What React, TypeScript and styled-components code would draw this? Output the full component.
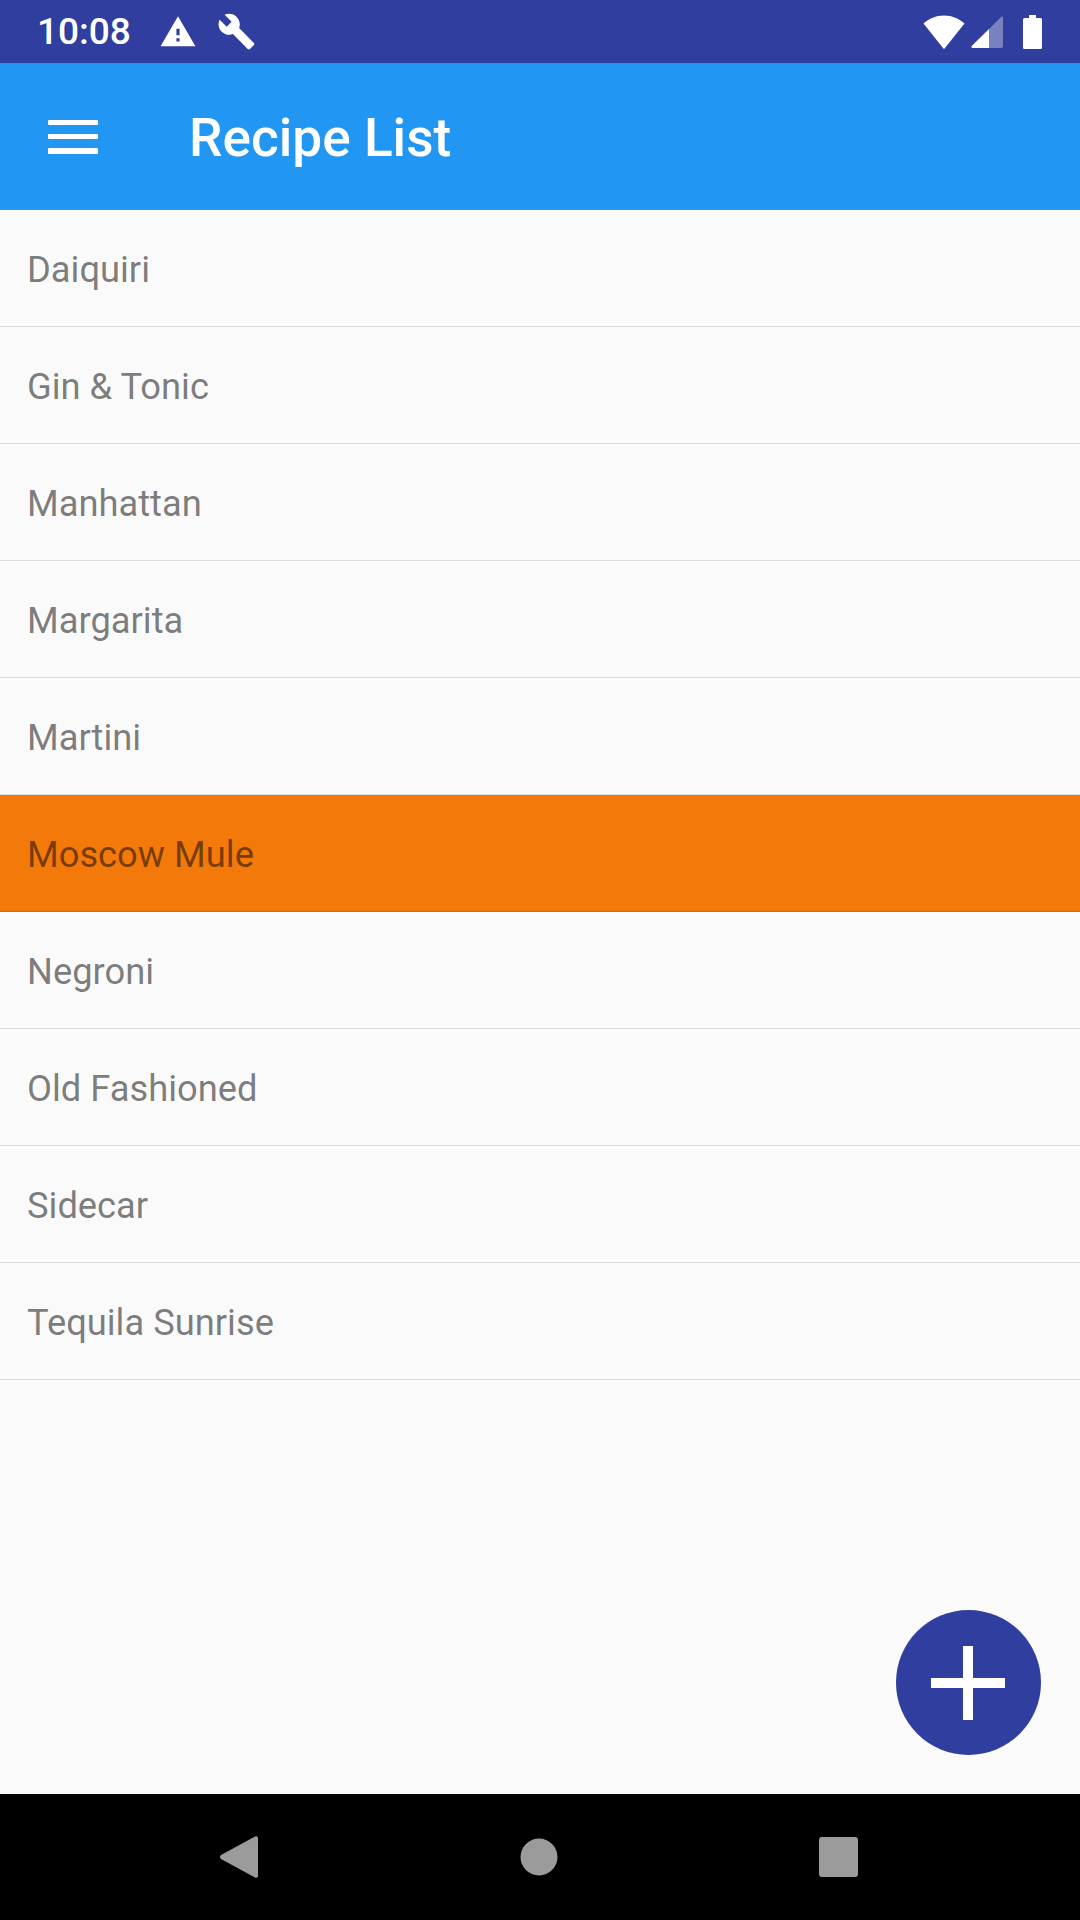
import styled, { createGlobalStyle } from 'styled-components';

const recipes = [
  'Daiquiri',
  'Gin & Tonic',
  'Manhattan',
  'Margarita',
  'Martini',
  'Moscow Mule',
  'Negroni',
  'Old Fashioned',
  'Sidecar',
  'Tequila Sunrise',
];

const GlobalStyle = createGlobalStyle`
  html, body {
    margin: 0;
    padding: 0;
    background: #fafafa;
    font-family: Roboto, "Liberation Sans", sans-serif;
  }
`;

const Screen = styled.div`
  position: relative;
  display: flex;
  flex-direction: column;
  width: 1080px;
  height: 1920px;
  overflow: hidden;
  background: #fafafa;
`;

const StatusBar = styled.div`
  display: flex;
  align-items: center;
  flex: 0 0 63px;
  padding: 0 38px 0 37px;
  background: #303f9f;
  color: #fff;
`;

const Clock = styled.span`
  font-size: 37px;
  font-weight: 500;
  line-height: 63px;
  margin-right: 28px;
`;

const StatusIcon = styled.svg<{ $gap?: number }>`
  display: block;
  fill: #fff;
  margin-right: ${p => p.$gap ?? 0}px;
`;

const Spacer = styled.div`
  flex: 1;
`;

const AppBar = styled.header`
  display: flex;
  align-items: center;
  flex: 0 0 147px;
  padding-left: 48px;
  background: #2196f3;
  color: #fff;
`;

const MenuIcon = styled.div`
  display: flex;
  flex-direction: column;
  justify-content: space-between;
  width: 50px;
  height: 34px;
  margin-right: 91px;
  > span {
    display: block;
    height: 5.5px;
    background: #fff;
    border-radius: 1px;
  }
`;

const Title = styled.h1`
  margin: 4px 0 0;
  font-size: 53.2px;
  font-weight: 500;
  line-height: 1;
`;

const List = styled.div`
  flex: 1;
`;

const Row = styled.div<{ $selected?: boolean }>`
  display: flex;
  align-items: center;
  box-sizing: border-box;
  height: 117px;
  padding: 2px 0 0 27px;
  font-size: 36.3px;
  color: rgba(0, 0, 0, 0.52);
  background: ${p => (p.$selected ? '#f3790a' : 'transparent')};
  border-bottom: 1px solid rgba(0, 0, 0, 0.12);
`;

const Fab = styled.button`
  position: absolute;
  right: 39px;
  bottom: 165px;
  display: flex;
  align-items: center;
  justify-content: center;
  width: 145px;
  height: 145px;
  padding: 0 2px 0 0;
  border: 0;
  border-radius: 50%;
  background: #303f9f;
`;

const NavBar = styled.nav`
  display: grid;
  grid-template-columns: repeat(3, 300px);
  justify-content: center;
  justify-items: center;
  align-items: center;
  flex: 0 0 126px;
  padding-right: 3px;
  background: #000;
`;

const NavIcon = styled.svg`
  display: block;
  fill: #9b9b9b;
`;

export default function App() {
  return (
    <Screen>
      <GlobalStyle />
      <StatusBar>
        <Clock>10:08</Clock>
        <StatusIcon $gap={20} width="38" height="38" viewBox="0 0 24 24">
          <path d="M1 21h22L12 2 1 21zm12-3h-2v-2h2v2zm0-4h-2v-4h2v4z" />
        </StatusIcon>
        <StatusIcon width="39" height="39" viewBox="0 0 24 24">
          <path d="M22.7 19l-9.1-9.1c.9-2.3.4-5-1.5-6.9-2-2-5-2.4-7.4-1.3L9 6 6 9 1.600 4.700C.4 7.100.9 10.100 2.900 12.100c1.900 1.900 4.600 2.400 6.900 1.500l9.100 9.100c.4.4 1 .4 1.400 0l2.300-2.300c.5-.4.5-1.100.1-1.400z" />
        </StatusIcon>
        <Spacer />
        <StatusIcon $gap={6} width="42" height="34" viewBox="0 0 42 34">
          <path d="M0.500 8.500C6 3.500 13 0.500 21 0.500s15 3 20.500 8L21.800 33.200a1 1 0 0 1-1.600 0z" />
        </StatusIcon>
        <StatusIcon $gap={20} width="32" height="32" viewBox="0 0 32 32">
          <path opacity="0.35" d="M18 13L30 1c.8-.8 2-.3 2 .8V30a2 2 0 0 1-2 2H18z" />
          <path d="M18 13v19H1.500c-1 0-1.500-1.200-.8-1.900z" />
        </StatusIcon>
        <StatusIcon width="19" height="34" viewBox="0 0 19 34">
          <path d="M6 0h7v3h4.500A1.500 1.500 0 0 1 19 4.500v28a1.500 1.500 0 0 1-1.500 1.500h-16A1.500 1.500 0 0 1 0 32.500v-28A1.500 1.500 0 0 1 1.500 3H6z" />
        </StatusIcon>
      </StatusBar>

      <AppBar>
        <MenuIcon>
          <span />
          <span />
          <span />
        </MenuIcon>
        <Title>Recipe List</Title>
      </AppBar>

      <List>
        {recipes.map(name => (
          <Row key={name} $selected={name === 'Moscow Mule'}>
            {name}
          </Row>
        ))}
      </List>

      <Fab aria-label="Add recipe">
        <svg width="74" height="74" viewBox="0 0 74 74" fill="#fff">
          <path d="M32 0h10v32h32v10H42v32H32V42H0V32h32z" />
        </svg>
      </Fab>

      <NavBar>
        <NavIcon width="38" height="42" viewBox="0 0 38 42">
          <path d="M35 .6c1.300-1 3-.2 3 1.400v38c0 1.600-1.700 2.400-3 1.400L1 23c-1.300-1-1.300-3 0-4z" />
        </NavIcon>
        <NavIcon width="38" height="38" viewBox="0 0 38 38">
          <circle cx="19" cy="19" r="18.500" />
        </NavIcon>
        <NavIcon width="39" height="40" viewBox="0 0 39 40">
          <rect width="39" height="40" rx="3" />
        </NavIcon>
      </NavBar>
    </Screen>
  );
}
